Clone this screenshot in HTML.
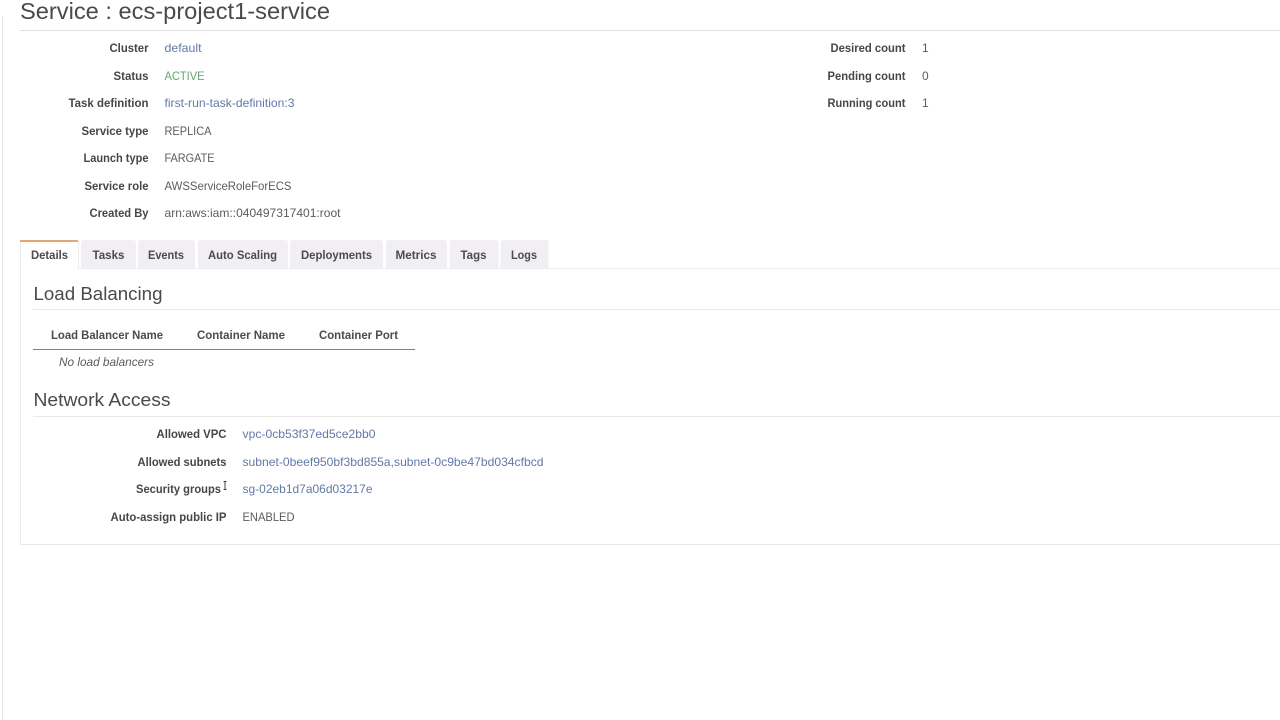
<!DOCTYPE html>
<html><head><meta charset="utf-8"><style>
html,body{margin:0;padding:0;background:#fff;width:1280px;height:720px;overflow:hidden}
svg{display:block;font-family:"Liberation Sans",sans-serif;filter:blur(.3px)}
.l{font-size:12px;font-weight:700;fill:#46464b;text-anchor:end}
.v{font-size:12px;fill:#5c5c5c}
.a{font-size:12px;fill:#6278a8}
.t{font-size:12px;fill:#4b4b50;font-weight:700}
.h{font-size:18px;fill:#4a4a4a}
</style></head><body>
<svg width="1280" height="720" viewBox="0 0 1280 720">
<rect x="2" y="16" width="1" height="704" fill="#e6e6e6"/>
<text x="20" y="19" class="h" style="font-size:23px" textLength="310" lengthAdjust="spacingAndGlyphs">Service : ecs-project1-service</text>
<rect x="20" y="30" width="1260" height="1" fill="#dedede"/>

<text x="148.500" y="52" class="l" textLength="39" lengthAdjust="spacingAndGlyphs">Cluster</text>
<text x="148.500" y="80" class="l" textLength="35" lengthAdjust="spacingAndGlyphs">Status</text>
<text x="148.500" y="107" class="l" textLength="80" lengthAdjust="spacingAndGlyphs">Task definition</text>
<text x="148.500" y="135" class="l" textLength="67" lengthAdjust="spacingAndGlyphs">Service type</text>
<text x="148.500" y="162" class="l" textLength="65" lengthAdjust="spacingAndGlyphs">Launch type</text>
<text x="148.500" y="190" class="l" textLength="64" lengthAdjust="spacingAndGlyphs">Service role</text>
<text x="148.500" y="217" class="l" textLength="59" lengthAdjust="spacingAndGlyphs">Created By</text>

<text x="164.500" y="52" class="a" textLength="37" lengthAdjust="spacingAndGlyphs">default</text>
<text x="164.500" y="80" class="v" style="fill:#62a86e" textLength="40" lengthAdjust="spacingAndGlyphs">ACTIVE</text>
<text x="164.500" y="107" class="a" textLength="130" lengthAdjust="spacingAndGlyphs">first-run-task-definition:3</text>
<text x="164.500" y="135" class="v" textLength="47" lengthAdjust="spacingAndGlyphs">REPLICA</text>
<text x="164.500" y="162" class="v" textLength="50" lengthAdjust="spacingAndGlyphs">FARGATE</text>
<text x="164.500" y="190" class="v" textLength="127" lengthAdjust="spacingAndGlyphs">AWSServiceRoleForECS</text>
<text x="164.500" y="217" class="v" textLength="176" lengthAdjust="spacingAndGlyphs">arn:aws:iam::040497317401:root</text>

<text x="905.500" y="52" class="l" textLength="75" lengthAdjust="spacingAndGlyphs">Desired count</text>
<text x="905.500" y="80" class="l" textLength="78" lengthAdjust="spacingAndGlyphs">Pending count</text>
<text x="905.500" y="107" class="l" textLength="78" lengthAdjust="spacingAndGlyphs">Running count</text>
<text x="922" y="52" class="v">1</text>
<text x="922" y="80" class="v">0</text>
<text x="922" y="107" class="v">1</text>

<!-- tabs -->
<g fill="#f1eff3">
<path d="M81 268V243q0-3 3-3h49q3 0 3 3v25z"/>
<path d="M138 268V243q0-3 3-3h51q3 0 3 3v25z"/>
<path d="M198 268V243q0-3 3-3h84q3 0 3 3v25z"/>
<path d="M290 268V243q0-3 3-3h87q3 0 3 3v25z"/>
<path d="M386 268V243q0-3 3-3h55q3 0 3 3v25z"/>
<path d="M449.500 268V243q0-3 3-3h43q3 0 3 3v25z"/>
<path d="M500.500 268V243q0-3 3-3h42q3 0 3 3v25z"/>
</g>
<!-- panel -->
<rect x="20" y="268" width="1" height="276" fill="#ececec"/>
<rect x="20" y="544" width="1260" height="1" fill="#e8e8e8"/>
<rect x="78" y="268" width="1202" height="1" fill="#ececec"/>
<rect x="20" y="241" width="1" height="28" fill="#ececec"/>
<rect x="78" y="241" width="1" height="28" fill="#ececec"/>
<rect x="20" y="240" width="58" height="2" fill="#e2a673"/>

<text x="31" y="259" class="t" textLength="37" lengthAdjust="spacingAndGlyphs">Details</text>
<text x="92.500" y="259" class="t" textLength="32" lengthAdjust="spacingAndGlyphs">Tasks</text>
<text x="148" y="259" class="t" textLength="36" lengthAdjust="spacingAndGlyphs">Events</text>
<text x="208" y="259" class="t" textLength="69" lengthAdjust="spacingAndGlyphs">Auto Scaling</text>
<text x="301" y="259" class="t" textLength="71" lengthAdjust="spacingAndGlyphs">Deployments</text>
<text x="395.500" y="259" class="t" textLength="41" lengthAdjust="spacingAndGlyphs">Metrics</text>
<text x="460.500" y="259" class="t" textLength="26" lengthAdjust="spacingAndGlyphs">Tags</text>
<text x="511" y="259" class="t" textLength="26" lengthAdjust="spacingAndGlyphs">Logs</text>

<text x="33.500" y="300" class="h" textLength="129" lengthAdjust="spacingAndGlyphs">Load Balancing</text>
<rect x="33" y="309" width="1247" height="1" fill="#e8e8e8"/>

<text x="51" y="339" class="t" textLength="112" lengthAdjust="spacingAndGlyphs">Load Balancer Name</text>
<text x="197" y="339" class="t" textLength="88" lengthAdjust="spacingAndGlyphs">Container Name</text>
<text x="319" y="339" class="t" textLength="79" lengthAdjust="spacingAndGlyphs">Container Port</text>
<rect x="33" y="349" width="382" height="1" fill="#808080"/>
<text x="59" y="366" class="v" style="font-style:italic" textLength="95" lengthAdjust="spacingAndGlyphs">No load balancers</text>

<text x="33.500" y="406" class="h" textLength="137" lengthAdjust="spacingAndGlyphs">Network Access</text>
<rect x="33" y="416" width="1247" height="1" fill="#e8e8e8"/>

<text x="226.500" y="438" class="l" textLength="70" lengthAdjust="spacingAndGlyphs">Allowed VPC</text>
<text x="226.500" y="466" class="l" textLength="89" lengthAdjust="spacingAndGlyphs">Allowed subnets</text>
<text x="136" y="493" class="t" style="fill:#46464b" textLength="85" lengthAdjust="spacingAndGlyphs">Security groups</text>
<text x="226.500" y="521" class="l" textLength="116" lengthAdjust="spacingAndGlyphs">Auto-assign public IP</text>

<text x="242.500" y="438" class="a" textLength="133" lengthAdjust="spacingAndGlyphs">vpc-0cb53f37ed5ce2bb0</text>
<text x="242.500" y="466" class="a" textLength="301" lengthAdjust="spacingAndGlyphs">subnet-0beef950bf3bd855a,subnet-0c9be47bd034cfbcd</text>
<text x="242.500" y="493" class="a" textLength="130" lengthAdjust="spacingAndGlyphs">sg-02eb1d7a06d03217e</text>
<text x="242.500" y="521" class="v" textLength="52" lengthAdjust="spacingAndGlyphs">ENABLED</text>

<!-- I-beam cursor -->
<path d="M223.500 481.500h3M225 481.500v8M223.500 489.500h3" stroke="#444" stroke-width="1" fill="none"/>
</svg>
</body></html>
